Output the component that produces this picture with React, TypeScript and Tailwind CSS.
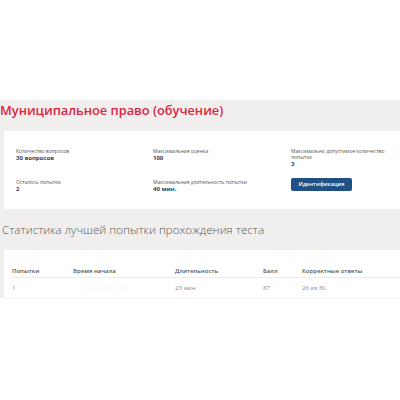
import React from "react";

const stats = [
  { label: "Количество вопросов", value: "30 вопросов" },
  { label: "Максимальная оценка", value: "100" },
  { label: "Максимально допустимое количество попыток", value: "3" },
  { label: "Осталось попыток", value: "2" },
  { label: "Максимальная длительность попытки", value: "40 мин." },
];

function Stat({ label, value }: { label: string; value: string }) {
  return (
    <div className="max-w-[100px]">
      <div className="text-[5px] leading-[6px] text-[#555]">{label}</div>
      <div className="text-[6px] leading-[8px] font-bold text-[#2c4263]">{value}</div>
    </div>
  );
}

export default function App() {
  return (
    <div className="w-[400px] h-[400px] overflow-hidden bg-white font-['Open_Sans',sans-serif]">
      <div className="h-[100px]" />

      <div className="bg-[#f0efee]">
        {/* Title */}
        <h1 className="pl-0 text-[12.8px] leading-[20px] font-semibold text-[#d92742] whitespace-nowrap">
          Муниципальное право (обучение)
        </h1>

        {/* Info card */}
        <div className="ml-[4px] mt-[11px] h-[78px] bg-white pl-[12px] pt-[17px] grid grid-cols-[137px_138px_1fr] grid-rows-[31px_1fr]">
          {stats.map((s) => (
            <Stat key={s.label} label={s.label} value={s.value} />
          ))}
          <div>
            <button className="block mt-[-1px] w-[61px] h-[13px] rounded-[2px] bg-[#1f5184] text-white text-[5.5px] font-semibold leading-[13px]">
              Идентификация
            </button>
          </div>
        </div>

        {/* Stats heading */}
        <h2 className="pl-[2px] pt-[13px] text-[11.6px] leading-[16px] font-light text-[#555] whitespace-nowrap">
          Статистика лучшей попытки прохождения теста
        </h2>

        {/* Table card */}
        <div className="ml-[4px] mt-[12px] h-[48px] bg-white pl-[8px] pt-[16px] shadow-[0_1px_1px_rgba(0,0,0,0.04)]">
          <div className="flex h-[12px] items-center border-b border-[#ececec] text-[6px] font-semibold text-[#555]">
            <div className="w-[61px]">Попытки</div>
            <div className="w-[102px]">Время начала</div>
            <div className="w-[88px]">Длительность</div>
            <div className="w-[39px]">Балл</div>
            <div>Корректные ответы</div>
          </div>
          <div className="flex h-[20px] items-center text-[6px] text-[#888]">
            <div className="w-[61px]">1</div>
            <div className="w-[102px] pl-[10px] text-[#f2f2f2] blur-[1px]">00.00.0000 00:00</div>
            <div className="w-[88px]">23 мин</div>
            <div className="w-[39px]">87</div>
            <div>26 из 30</div>
          </div>
        </div>
      </div>
    </div>
  );
}
